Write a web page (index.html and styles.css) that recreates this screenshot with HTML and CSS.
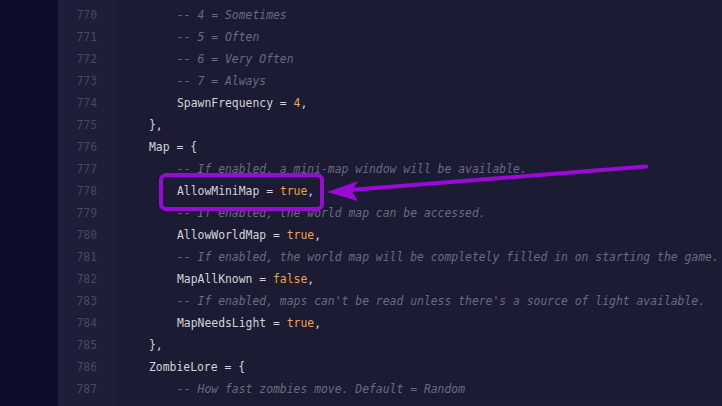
FILE: index.html
```html
<!DOCTYPE html>
<html>
<head>
<meta charset="utf-8">
<link rel="stylesheet" href="styles.css">
</head>
<body>
<div class="page">
  <div class="strip"></div>
  <div class="editor">
    <div class="gutter">
      <div class="ln">770</div><div class="ln">771</div><div class="ln">772</div><div class="ln">773</div>
      <div class="ln">774</div><div class="ln">775</div><div class="ln">776</div><div class="ln">777</div>
      <div class="ln">778</div><div class="ln">779</div><div class="ln">780</div><div class="ln">781</div>
      <div class="ln">782</div><div class="ln">783</div><div class="ln">784</div><div class="ln">785</div>
      <div class="ln">786</div><div class="ln">787</div>
    </div>
    <div class="code">
      <div class="line i2"><span class="c">-- 4 = Sometimes</span></div>
      <div class="line i2"><span class="c">-- 5 = Often</span></div>
      <div class="line i2"><span class="c">-- 6 = Very Often</span></div>
      <div class="line i2"><span class="c">-- 7 = Always</span></div>
      <div class="line i2">SpawnFrequency = <span class="v">4</span>,</div>
      <div class="line i1">},</div>
      <div class="line i1">Map = {</div>
      <div class="line i2"><span class="c">-- If enabled, a mini-map window will be available.</span></div>
      <div class="line i2">AllowMiniMap = <span class="v">true</span>,</div>
      <div class="line i2"><span class="c">-- If enabled, the world map can be accessed.</span></div>
      <div class="line i2">AllowWorldMap = <span class="v">true</span>,</div>
      <div class="line i2"><span class="c">-- If enabled, the world map will be completely filled in on starting the game.</span></div>
      <div class="line i2">MapAllKnown = <span class="v">false</span>,</div>
      <div class="line i2"><span class="c">-- If enabled, maps can't be read unless there's a source of light available.</span></div>
      <div class="line i2">MapNeedsLight = <span class="v">true</span>,</div>
      <div class="line i1">},</div>
      <div class="line i1">ZombieLore = {</div>
      <div class="line i2"><span class="c">-- How fast zombies move. Default = Random</span></div>
    </div>
  </div>
  <svg class="annot" width="722" height="406" viewBox="0 0 722 406">
    <rect x="161" y="175" width="161" height="34" rx="5" ry="5" fill="none" stroke="#9a0ad6" stroke-width="4"/>
    <line x1="646" y1="166.5" x2="350" y2="190" stroke="#9a0ad6" stroke-width="4" stroke-linecap="round"/>
    <polygon points="327,192 358,181 352,191 358,201" fill="#9a0ad6"/>
  </svg>
</div>
</body>
</html>
```
FILE: styles.css
```css
html, body {
  margin: 0;
  padding: 0;
  background: #1b1b33;
}
.page {
  position: relative;
  width: 722px;
  height: 406px;
  overflow: hidden;
  display: flex;
}
.strip {
  width: 58px;
  flex: none;
  background: #0d0d29;
}
.editor {
  flex: 1;
  display: flex;
  background: #1b1b33;
  font-family: "DejaVu Sans Mono", "Liberation Mono", monospace;
  font-size: 11.4px;
}
.gutter {
  width: 60px;
  flex: none;
  background: #1e1e39;
  padding-top: 4px;
  box-sizing: border-box;
  padding-right: 21px;
}
.ln {
  height: 22px;
  line-height: 22px;
  text-align: right;
  color: #464860;
}
.code {
  padding-top: 4px;
  padding-left: 3px;
}
.line {
  height: 22px;
  line-height: 22px;
  white-space: pre;
  color: #d4d4d8;
}
.i1 { padding-left: 28px; }
.i2 { padding-left: 56px; }
.c {
  color: #6a6b80;
  font-style: italic;
}
.v {
  color: #f3a148;
}
.annot {
  position: absolute;
  left: 0;
  top: 0;
}
```
